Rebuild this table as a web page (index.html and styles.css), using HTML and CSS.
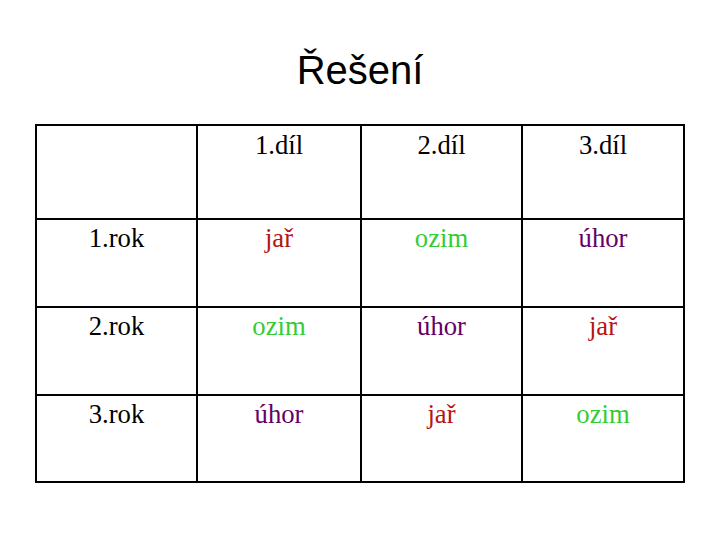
FILE: index.html
```html
<!DOCTYPE html>
<html>
<head>
<meta charset="utf-8">
<link rel="stylesheet" href="styles.css">
</head>
<body>
<div class="slide">
  <h1 class="title">Řešení</h1>
  <table class="grid">
    <tr class="head"><td class="c1"></td><td class="c2">1.díl</td><td class="c3">2.díl</td><td class="c4">3.díl</td></tr>
    <tr><td>1.rok</td><td class="jar">jař</td><td class="ozim">ozim</td><td class="uhor">úhor</td></tr>
    <tr><td>2.rok</td><td class="ozim">ozim</td><td class="uhor">úhor</td><td class="jar">jař</td></tr>
    <tr class="last"><td>3.rok</td><td class="uhor">úhor</td><td class="jar">jař</td><td class="ozim">ozim</td></tr>
  </table>
</div>
</body>
</html>
```
FILE: styles.css
```css
html, body { margin: 0; padding: 0; background: #fff; }
.slide {
  width: 720px;
  height: 540px;
  display: flex;
  flex-direction: column;
  align-items: center;
}
.title {
  margin: 47px 0 0 0;
  font-family: "Liberation Sans", Arial, sans-serif;
  font-weight: normal;
  font-size: 40px;
  line-height: 46px;
  color: #000;
}
.grid {
  margin-top: 31px;
  margin-left: 0;
  border-collapse: collapse;
  font-family: "Liberation Serif", "Times New Roman", serif;
  font-size: 26.7px;
  color: #000;
}
.grid td {
  border: 2px solid #000;
  text-align: center;
  vertical-align: top;
  padding: 3px 0 0 0;
  height: 88px;
  box-sizing: border-box;
}
.grid td.c1 { width: 161px; }
.grid td.c2 { width: 164px; }
.grid td.c3 { width: 161px; }
.grid td.c4 { width: 162px; }
.grid tr.head td { height: 94px; padding-top: 4px; }
.grid tr.last td { height: 87px; }
.jar { color: #b81414; }
.ozim { color: #33cc33; }
.uhor { color: #660066; }
```
